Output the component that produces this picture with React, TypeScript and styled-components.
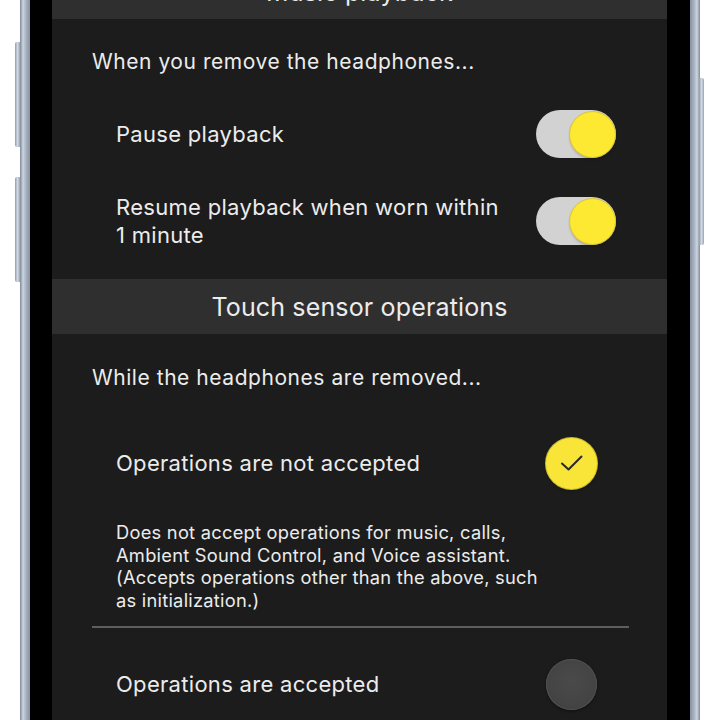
import styled, { createGlobalStyle } from "styled-components";

const GlobalStyle = createGlobalStyle`
  html, body {
    margin: 0;
    padding: 0;
    background: #ffffff;
  }
  body {
    font-family: Inter, "Noto Sans", "Liberation Sans", sans-serif;
    -webkit-font-smoothing: antialiased;
  }
`;

const Stage = styled.div`
  width: 720px;
  height: 720px;
  overflow: hidden;
  background: #ffffff;
  display: flex;
`;

const Phone = styled.div`
  position: relative;
  margin-left: 20px;
  width: 680px;
  height: 720px;
  box-sizing: border-box;
  padding: 0 10px;
  display: flex;
  background: linear-gradient(
    to right,
    #7d8898 0,
    #cdd5df 3px,
    #a7b2c2 6px,
    #8793a4 10px,
    #000 10px,
    #000 calc(100% - 10px),
    #8793a4 calc(100% - 10px),
    #a7b2c2 calc(100% - 6px),
    #cdd5df calc(100% - 3px),
    #7d8898 100%
  );
`;

const SideButton = styled.div<{ $side: "left" | "right"; $top: number; $height: number }>`
  position: absolute;
  top: ${(p) => p.$top}px;
  height: ${(p) => p.$height}px;
  width: 5px;
  ${(p) => (p.$side === "left" ? "left: -5px;" : "right: -4px;")}
  border-radius: ${(p) => (p.$side === "left" ? "2px 0 0 2px" : "0 2px 2px 0")};
  background: linear-gradient(to right, #8e99a9, #d3dae3, #98a3b3);
`;

const Bezel = styled.div`
  flex: 1;
  display: flex;
  padding: 0 23px 0 22px;
  background: #000;
`;

const Screen = styled.div`
  flex: 1;
  background: #1c1c1c;
  overflow: hidden;
  color: #ececec;
`;

const Scroller = styled.div`
  margin-top: -36px;
  display: flex;
  flex-direction: column;
`;

const SectionHeader = styled.div`
  height: 55px;
  display: flex;
  align-items: center;
  justify-content: center;
  background: #2f2f2f;
  font-size: 25px;
  letter-spacing: 0.15px;
`;

const SectionBody = styled.div<{ $top: number; $bottom: number }>`
  display: flex;
  flex-direction: column;
  padding: ${(p) => p.$top}px 38px ${(p) => p.$bottom}px 40px;
`;

const Intro = styled.div<{ $after: number }>`
  font-size: 21px;
  line-height: 28px;
  letter-spacing: 0.55px;
  margin-bottom: ${(p) => p.$after}px;
`;

const Row = styled.div<{ $after?: number; $right: number }>`
  display: flex;
  align-items: center;
  justify-content: space-between;
  min-height: 56px;
  padding: 0 ${(p) => p.$right}px 0 24px;
  margin-bottom: ${(p) => p.$after ?? 0}px;
`;

const Label = styled.div`
  font-size: 22px;
  line-height: 28px;
  letter-spacing: 0.3px;
  max-width: 400px;
`;

const Toggle = styled.div`
  width: 80px;
  height: 48px;
  border-radius: 24px;
  background: #d2d2d2;
  display: flex;
  align-items: center;
  justify-content: flex-end;
  padding: 0 1px;
  box-sizing: border-box;
  flex-shrink: 0;
`;

const Knob = styled.div`
  width: 45px;
  height: 45px;
  border-radius: 50%;
  background: #fde832;
  box-shadow: 0 0 0 1px #d9c640, 0 2px 3px rgba(0, 0, 0, 0.25);
`;

const Radio = styled.div<{ $checked: boolean }>`
  width: 51px;
  height: 51px;
  border-radius: 50%;
  flex-shrink: 0;
  display: flex;
  align-items: center;
  justify-content: center;
  background: ${(p) =>
    p.$checked ? "#f9e537" : "radial-gradient(circle at 50% 45%, #4a4a4a 0, #444 60%, #3c3c3c 100%)"};
  box-shadow: ${(p) =>
    p.$checked
      ? "0 0 0 1px #cbb92e, 0 1px 3px rgba(0, 0, 0, 0.5)"
      : "inset 0 0 0 1px #505050, 0 1px 3px rgba(0, 0, 0, 0.5)"};
`;

const Description = styled.div`
  font-size: 18.3px;
  line-height: 22.5px;
  letter-spacing: 0.25px;
  padding-left: 24px;
  margin: 30px 0 15px;
`;

const Divider = styled.div`
  height: 2px;
  background: #5e5e5e;
  margin-bottom: 28px;
`;

const Check = () => (
  <svg width="24" height="18" viewBox="0 0 24 18" fill="none">
    <path d="M2 9.5 L8.5 15.5 L21.5 2.5" stroke="#2a2a2a" strokeWidth="2" strokeLinecap="round" strokeLinejoin="round" />
  </svg>
);

export default function App() {
  return (
    <Stage>
      <GlobalStyle />
      <Phone>
        <SideButton $side="left" $top={42} $height={105} />
        <SideButton $side="left" $top={177} $height={105} />
        <SideButton $side="right" $top={78} $height={167} />
        <Bezel>
          <Screen>
            <Scroller>
              <SectionHeader>Music playback</SectionHeader>
              <SectionBody $top={29} $bottom={30}>
                <Intro $after={30}>When you remove the headphones...</Intro>
                <Row $right={13} $after={31}>
                  <Label>Pause playback</Label>
                  <Toggle>
                    <Knob />
                  </Toggle>
                </Row>
                <Row $right={13}>
                  <Label>
                    Resume playback when worn within
                    <br />1 minute
                  </Label>
                  <Toggle>
                    <Knob />
                  </Toggle>
                </Row>
              </SectionBody>
              <SectionHeader>Touch sensor operations</SectionHeader>
              <SectionBody $top={30} $bottom={0}>
                <Intro $after={43}>While the headphones are removed...</Intro>
                <Row $right={32}>
                  <Label>Operations are not accepted</Label>
                  <Radio $checked>
                    <Check />
                  </Radio>
                </Row>
                <Description>
                  Does not accept operations for music, calls,
                  <br />
                  Ambient Sound Control, and Voice assistant.
                  <br />
                  (Accepts operations other than the above, such
                  <br />
                  as initialization.)
                </Description>
                <Divider />
                <Row $right={32}>
                  <Label>Operations are accepted</Label>
                  <Radio $checked={false} />
                </Row>
              </SectionBody>
            </Scroller>
          </Screen>
        </Bezel>
      </Phone>
    </Stage>
  );
}
